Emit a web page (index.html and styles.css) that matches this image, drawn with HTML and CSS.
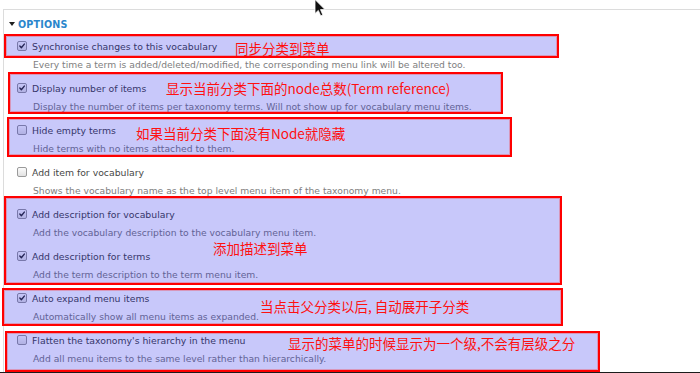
FILE: index.html
```html
<!DOCTYPE html>
<html lang="en">
<head>
<meta charset="utf-8">
<title>Options</title>
<link rel="stylesheet" href="styles.css">
</head>
<body>
<div class="page">
  <div class="fieldset">
    <div class="legend"><span class="tri"></span>Options</div>

    <div class="item">
      <div class="label"><span class="cb on"><svg viewBox="0 0 10 10"><path d="M2.3 5.1 L4.2 7.2 L7.9 2.6"/></svg></span>Synchronise changes to this vocabulary</div>
      <div class="desc">Every time a term is added/deleted/modified, the corresponding menu link will be altered too.</div>
    </div>
    <div class="item">
      <div class="label"><span class="cb on"><svg viewBox="0 0 10 10"><path d="M2.3 5.1 L4.2 7.2 L7.9 2.6"/></svg></span>Display number of items</div>
      <div class="desc">Display the number of items per taxonomy terms. Will not show up for vocabulary menu items.</div>
    </div>
    <div class="item">
      <div class="label"><span class="cb"></span>Hide empty terms</div>
      <div class="desc">Hide terms with no items attached to them.</div>
    </div>
    <div class="item">
      <div class="label"><span class="cb"></span>Add item for vocabulary</div>
      <div class="desc">Shows the vocabulary name as the top level menu item of the taxonomy menu.</div>
    </div>
    <div class="item">
      <div class="label"><span class="cb on"><svg viewBox="0 0 10 10"><path d="M2.3 5.1 L4.2 7.2 L7.9 2.6"/></svg></span>Add description for vocabulary</div>
      <div class="desc">Add the vocabulary description to the vocabulary menu item.</div>
    </div>
    <div class="item">
      <div class="label"><span class="cb on"><svg viewBox="0 0 10 10"><path d="M2.3 5.1 L4.2 7.2 L7.9 2.6"/></svg></span>Add description for terms</div>
      <div class="desc">Add the term description to the term menu item.</div>
    </div>
    <div class="item">
      <div class="label"><span class="cb on"><svg viewBox="0 0 10 10"><path d="M2.3 5.1 L4.2 7.2 L7.9 2.6"/></svg></span>Auto expand menu items</div>
      <div class="desc">Automatically show all menu items as expanded.</div>
    </div>
    <div class="item">
      <div class="label"><span class="cb"></span>Flatten the taxonomy's hierarchy in the menu</div>
      <div class="desc">Add all menu items to the same level rather than hierarchically.</div>
    </div>
  </div>

  <div class="note n1"><span class="zh">同步分类到菜单</span></div>
  <div class="note n2"><span class="zh">显示当前分类下面的node总数(Term reference)</span></div>
  <div class="note n3"><span class="zh">如果当前分类下面没有Node就隐藏</span></div>
  <div class="note n4"><span class="zh">添加描述到菜单</span></div>
  <div class="note n5"><span class="zh">当点击父分类以后, 自动展开子分类</span></div>
  <div class="note n6"><span class="zh">显示的菜单的时候显示为一个级,不会有层级之分</span></div>

  <svg class="cursor" viewBox="0 0 12 18" width="12" height="18"><path d="M1 0.5 L1 14.5 L4.3 11.4 L6.7 16.8 L8.8 15.9 L6.5 10.6 L11 10.6 Z"/></svg>
</div>
</body>
</html>
```
FILE: styles.css
```css
html, body {
  margin: 0;
  padding: 0;
  background: #fff;
  overflow: hidden;
}

.page {
  position: relative;
  height: 372px;
  border-bottom: 1px solid #1c1c1c;
  overflow: hidden;
  font-family: "DejaVu Sans", sans-serif;
}

.fieldset {
  margin: 9px 0 0 3px;
  height: 400px;
  border-top: 1px solid #dcdcdc;
  border-left: 1px solid #dcdcdc;
}

.legend {
  display: flex;
  align-items: center;
  gap: 3px;
  height: 14px;
  margin: 7px 0 6px 5px;
  font-size: 9.6px;
  font-weight: bold;
  letter-spacing: 0.15px;
  text-transform: uppercase;
  color: #2a86cc;
}

.tri {
  width: 0;
  height: 0;
  border-left: 3px solid transparent;
  border-right: 3px solid transparent;
  border-top: 4px solid #1f1f1f;
}

.item {
  height: 42px;
  padding-left: 13px;
}

.label {
  display: flex;
  align-items: center;
  gap: 5px;
  height: 18px;
  font-size: 9.3px;
  color: #474747;
  white-space: nowrap;
}

.desc {
  margin: 4px 0 0 16px;
  line-height: 12px;
  height: 12px;
  font-size: 9.2px;
  color: #7e7e7e;
  white-space: nowrap;
}

.cb {
  box-sizing: border-box;
  width: 10px;
  height: 10px;
  border: 1px solid #9a9a9a;
  border-radius: 2px;
  background: linear-gradient(#fbfbfb, #e2e2e2);
  display: flex;
}

.cb svg {
  width: 8px;
  height: 8px;
}

.cb svg path {
  fill: none;
  stroke: #2e2e2e;
  stroke-width: 1.7;
  stroke-linecap: round;
  stroke-linejoin: round;
}

.note {
  position: absolute;
  box-sizing: border-box;
  border: 2px solid #ff0000;
  background: rgba(0, 0, 232, 0.216);
  box-shadow: inset 0 0 0 1px rgba(255, 40, 40, 0.3);
}

.zh {
  display: block;
  font-family: "Noto Sans CJK SC", sans-serif;
  font-size: 13.5px;
  line-height: 12px;
  color: #ff1010;
  white-space: nowrap;
}

.n1 { left: 4px; top: 34px; width: 555px; height: 24px; padding: 5.5px 0 0 229px; }
.n2 { left: 8px; top: 72px; width: 495px; height: 42px; padding: 8px 0 0 156px; }
.n3 { left: 7px; top: 117px; width: 505px; height: 40px; padding: 7.5px 0 0 127px; }
.n4 { left: 4px; top: 196px; width: 558px; height: 89px; padding: 44px 0 0 207px; }
.n5 { left: 2px; top: 288px; width: 561px; height: 38px; padding: 10px 0 0 256px; }
.n6 { left: 5px; top: 331px; width: 595px; height: 41px; padding: 4px 0 0 281px; }

.cursor {
  position: absolute;
  left: 314px;
  top: -1px;
}

.cursor path {
  fill: #111;
  stroke: #fff;
  stroke-width: 0.8;
}
```
